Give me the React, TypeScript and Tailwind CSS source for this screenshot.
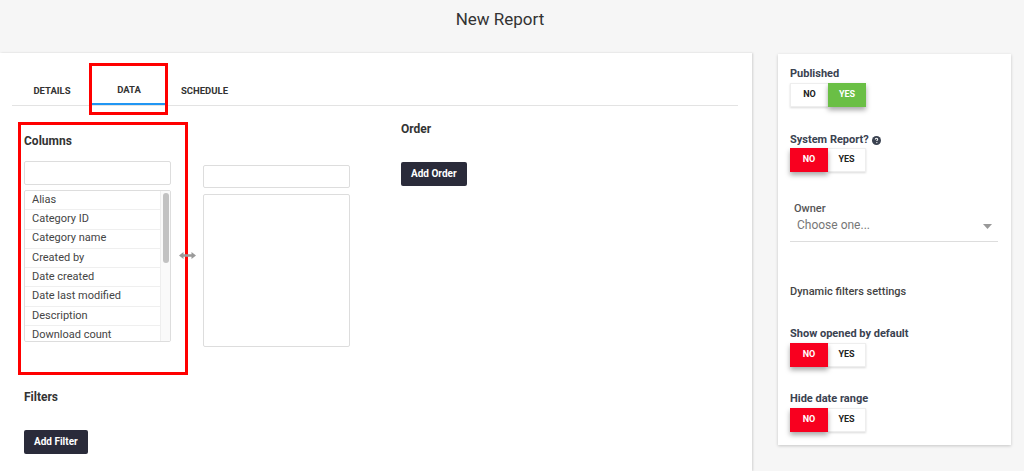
import React from 'react';

const columns = [
  'Alias',
  'Category ID',
  'Category name',
  'Created by',
  'Date created',
  'Date last modified',
  'Description',
  'Download count',
];

const Toggle = ({ on }: { on: boolean }) => (
  <div className="flex w-[76px] h-[24px] text-[9px] font-bold">
    <div
      className={
        on
          ? 'w-[38px] flex items-center justify-center bg-white text-[#222] border border-[#eeeeee] border-r-0 shadow-[0_1px_2px_rgba(0,0,0,0.15)]'
          : 'w-[38px] flex items-center justify-center bg-[#f8001f] text-white shadow-[0_3px_5px_rgba(0,0,0,0.35)] z-10'
      }
    >
      NO
    </div>
    <div
      className={
        on
          ? 'w-[38px] flex items-center justify-center bg-[#6abf45] text-white shadow-[0_3px_5px_rgba(0,0,0,0.35)] z-10'
          : 'w-[38px] flex items-center justify-center bg-white text-[#222] border border-[#eeeeee] border-l-0 shadow-[0_1px_2px_rgba(0,0,0,0.15)]'
      }
    >
      YES
    </div>
  </div>
);

const DarkButton = ({ label }: { label: string }) => (
  <button className="h-[24px] px-[10px] rounded-[2px] bg-[#2a2b3a] text-white text-[10px] font-bold">
    {label}
  </button>
);

export default function App() {
  return (
    <div className="w-[1024px] h-[471px] overflow-hidden bg-[#f6f6f6] font-['Roboto',sans-serif] text-[#333]">
      {/* Header */}
      <div className="h-[53px] flex justify-center pt-[8px] pr-[24px]">
        <h1 className="text-[17px] leading-[22px] text-[#333]">New Report</h1>
      </div>

      <div className="flex">
        {/* Main panel */}
        <div className="w-[752px] h-[418px] bg-white shadow-[1px_0_2px_rgba(0,0,0,0.15)] px-[12px]">
          {/* Tabs */}
          <div className="pt-[25px] flex border-b border-[#e3e3e3] w-[726px]">
            <div className="w-[80px] h-[27px] flex items-center justify-center text-[9.5px] font-bold text-[#333]">
              DETAILS
            </div>
            <div className="relative w-[74px] h-[27px] flex items-center justify-center text-[9.5px] font-bold text-[#333] border-b-2 border-[#2196f3] -mb-px">
              DATA
              <div className="absolute -left-[3px] -right-[2px] -top-[15px] -bottom-[12px] border-[3px] border-[#ff0000]" />
            </div>
            <div className="w-[77px] h-[27px] flex items-center justify-center text-[9.5px] font-bold text-[#333]">
              SCHEDULE
            </div>
          </div>

          {/* Data area */}
          <div className="flex items-start pl-[6px] mt-[16px]">
            <div className="relative w-[170px] h-[253px] border-[3px] border-[#ff0000] pl-[3px] pt-[8px]">
              <h3 className="text-[12px] leading-[16px] font-bold text-[#333]">Columns</h3>
              <div className="mt-[12px] w-[147px] h-[24px] border border-[#dddddd] rounded-[2px]" />
              <div className="mt-[5px] w-[147px] h-[152px] border border-[#dddddd] rounded-[2px] flex overflow-hidden">
                <div className="flex-1">
                  {columns.map((c) => (
                    <div
                      key={c}
                      className="h-[19.3px] border-b border-[#efefef] pl-[7px] flex items-center text-[11px] text-[#444]"
                    >
                      {c}
                    </div>
                  ))}
                </div>
                <div className="w-[10px] border-l border-[#eeeeee] bg-[#fafafa] pt-[2px] flex justify-center">
                  <div className="w-[6px] h-[70px] rounded-full bg-[#c2c2c2]" />
                </div>
              </div>
              <svg
                className="absolute top-[126px] -right-[11px]"
                width="17"
                height="9"
                viewBox="0 0 17 9"
              >
                <path d="M0 4.5 L4.5 1 V3.3 H12.5 V1 L17 4.5 L12.5 8 V5.7 H4.5 V8 Z" fill="#9a9a9a" />
              </svg>
            </div>

            <div className="ml-[15px] mt-[43px]">
              <div className="w-[147px] h-[23px] border border-[#dddddd] rounded-[2px]" />
              <div className="mt-[6px] w-[147px] h-[153px] border border-[#dddddd] rounded-[2px]" />
            </div>

            <div className="ml-[51px] -mt-[1px]">
              <h3 className="text-[12px] leading-[16px] font-bold text-[#333]">Order</h3>
              <div className="mt-[23px]">
                <DarkButton label="Add Order" />
              </div>
            </div>
          </div>

          <div className="pl-[12px] mt-[14px]">
            <h3 className="text-[12px] leading-[16px] font-bold text-[#333]">Filters</h3>
            <div className="mt-[23px]">
              <DarkButton label="Add Filter" />
            </div>
          </div>
        </div>

        {/* Right card */}
        <div className="ml-[26px] mt-[1px] w-[233px] h-[391px] bg-white shadow-[0_1px_3px_rgba(0,0,0,0.2)] pl-[12px] pt-[13px]">
          <div className="text-[11px] leading-[14px] font-bold text-[#3a4250]">Published</div>
          <div className="mt-[2px]">
            <Toggle on />
          </div>

          <div className="mt-[26px] flex items-center gap-[3px] text-[11px] leading-[14px] font-bold text-[#3a4250]">
            System Report?
            <svg width="9" height="9" viewBox="0 0 16 16">
              <circle cx="8" cy="8" r="8" fill="#3a4250" />
              <path
                d="M5.8 6.1 C5.8 4.8 6.8 4 8 4 C9.3 4 10.2 4.8 10.2 5.9 C10.2 7.3 8.6 7.4 8.6 8.9"
                stroke="white"
                strokeWidth="1.8"
                fill="none"
              />
              <circle cx="8.6" cy="11.6" r="1.1" fill="white" />
            </svg>
          </div>
          <div className="mt-[1px]">
            <Toggle on={false} />
          </div>

          <div className="mt-[30px] w-[208px]">
            <div className="pl-[4px] text-[11px] leading-[14px] font-medium text-[#555]">Owner</div>
            <div className="h-[26px] border-b border-[#dddddd] flex items-start justify-between pl-[7px] pr-[6px] pt-[1px]">
              <span className="text-[12px] leading-[16px] text-[#777]">Choose one...</span>
              <svg className="mt-[7px]" width="9" height="5" viewBox="0 0 9 5">
                <path d="M0 0 H9 L4.5 5 Z" fill="#999" />
              </svg>
            </div>
          </div>

          <div className="mt-[43px] text-[11px] leading-[14px] font-medium text-[#444]">
            Dynamic filters settings
          </div>

          <div className="mt-[28px] text-[11px] leading-[14px] font-bold text-[#3a4250]">
            Show opened by default
          </div>
          <div className="mt-[2px]">
            <Toggle on={false} />
          </div>

          <div className="mt-[25px] text-[11px] leading-[14px] font-bold text-[#3a4250]">Hide date range</div>
          <div className="mt-[2px]">
            <Toggle on={false} />
          </div>
        </div>
      </div>
    </div>
  );
}
